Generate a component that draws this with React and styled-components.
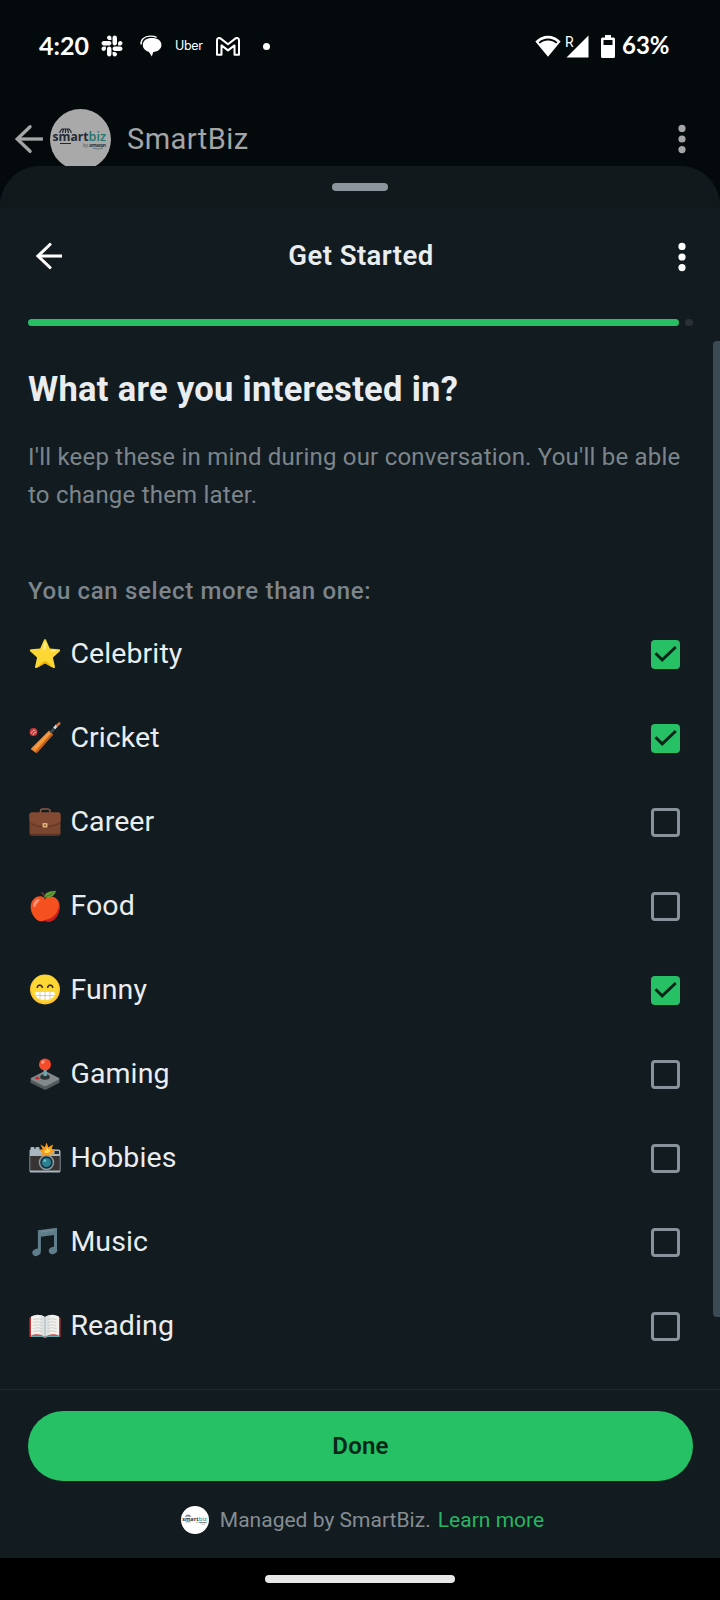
import React, { useState } from "react";
import styled, { createGlobalStyle } from "styled-components";
import { FaSlack } from "react-icons/fa";

const GlobalStyle = createGlobalStyle`
  * { box-sizing: border-box; }
  html, body { margin: 0; padding: 0; background: #04090c; }
  body { font-family: Roboto, "Liberation Sans", sans-serif; overflow: hidden; }
  svg { display: block; flex: none; }
  button { font: inherit; border: 0; padding: 0; background: none; }
`;

const Screen = styled.div`
  width: 720px;
  height: 1600px;
  display: flex;
  flex-direction: column;
  overflow: hidden;
  background: #04090c;
`;

const StatusBar = styled.header`
  height: 92px;
  flex: none;
  display: flex;
  align-items: center;
  justify-content: space-between;
  padding: 0 50px 0 39px;
  color: #fff;
`;

const StatusGroup = styled.div`
  display: flex;
  align-items: center;
`;

const StatusText = styled.span`
  width: ${(p) => p.$width}px;
  padding-bottom: 2px;
  font-family: Lato, Roboto, sans-serif;
  font-size: ${(p) => p.$size}px;
  font-weight: 700;
  line-height: 30px;
  white-space: nowrap;
`;

const StatusIcon = styled.span`
  display: flex;
  margin-left: ${(p) => p.$gap}px;
`;

const UberMark = styled.span`
  width: 28px;
  margin-left: 13px;
  font-family: Inter, sans-serif;
  font-size: 12.5px;
  line-height: 16px;
  letter-spacing: -0.3px;
`;

const SignalMark = styled.span`
  display: flex;
  align-items: flex-start;
  margin-left: 4px;
`;

const Roaming = styled.span`
  width: 9px;
  margin: -1px -8px 0 0;
  font-size: 14px;
  line-height: 16px;
`;

const ChatBar = styled.div`
  height: 74px;
  flex: none;
  display: flex;
  align-items: flex-start;
  padding: 16px 34px 0 14px;
  overflow: hidden;
  color: #a3a5a6;
`;

const ChatBarInner = styled.div`
  display: flex;
  align-items: center;
  flex: 1;
  height: 62px;
`;

const Avatar = styled.div`
  width: ${(p) => p.$size}px;
  height: ${(p) => p.$size}px;
  flex: none;
  border-radius: 50%;
  background: ${(p) => (p.$dim ? "#a9a9aa" : "#fff")};
  overflow: hidden;
`;

const ChatTitle = styled.div`
  flex: 1;
  margin-left: 16px;
  font-size: 29px;
  letter-spacing: 0.45px;
`;

const Sheet = styled.section`
  flex: 1;
  display: flex;
  flex-direction: column;
  border-radius: 40px 40px 0 0;
  overflow: hidden;
  background: #121b20;
`;

const SheetGrip = styled.div`
  height: 42px;
  flex: none;
  display: flex;
  justify-content: center;
  padding-top: 17px;
  background: #12191c;

  &::after {
    content: "";
    width: 56px;
    height: 8px;
    border-radius: 4px;
    background: #8c959d;
  }
`;

const Toolbar = styled.div`
  height: 111px;
  flex: none;
  display: grid;
  grid-template-columns: 28px 1fr 28px;
  align-items: start;
  padding: 29px 24px 0 35px;
  color: #fff;
`;

const IconButton = styled.button`
  height: ${(p) => p.$height || 40}px;
  display: flex;
  align-items: center;
  justify-content: center;
  color: inherit;
`;

const ToolbarTitle = styled.h1`
  margin: 0;
  padding-right: 9px;
  text-align: center;
  font-size: 27.5px;
  font-weight: 600;
  line-height: 38px;
  letter-spacing: 0.45px;
  color: #e9edef;
`;

const Progress = styled.div`
  height: 8px;
  flex: none;
  display: flex;
  gap: 6px;
  padding: 0 27px 0 28px;
`;

const ProgressPart = styled.span`
  flex: ${(p) => (p.$done ? "1" : "0 0 8px")};
  height: 7px;
  border-radius: 4px;
  background: ${(p) => (p.$done ? "#28bf64" : "#2a3036")};
`;

const Body = styled.div`
  flex: 1;
  display: flex;
  min-height: 0;
  padding-top: 14px;
`;

const Content = styled.main`
  flex: 1;
  padding: 24px 0 0 28px;
`;

const ScrollTrack = styled.div`
  width: 7px;

  &::before {
    content: "";
    display: block;
    height: 976px;
    border-radius: 4px 0 0 4px;
    background: #3c4a54;
  }
`;

const Question = styled.h2`
  margin: 0;
  font-size: 34.5px;
  font-weight: 700;
  line-height: 48px;
  letter-spacing: 0.3px;
  color: #e9edef;
`;

const Description = styled.p`
  margin: 25px 0 0;
  font-size: 24px;
  line-height: 38px;
  letter-spacing: 0.215px;
  color: #7c858b;
  white-space: nowrap;
`;

const GroupLabel = styled.div`
  margin-top: 62px;
  font-size: 24px;
  font-weight: 500;
  line-height: 30px;
  letter-spacing: 0.68px;
  color: #7c858b;
`;

const List = styled.div`
  margin-top: 6px;
`;

const Row = styled.label`
  height: 84px;
  display: flex;
  align-items: center;
  padding-right: 33px;
`;

const Emoji = styled.span`
  width: 42.4px;
  flex: none;
  padding-left: 1px;
`;

const RowLabel = styled.span`
  flex: 1;
  font-size: 28.5px;
  line-height: 36px;
  letter-spacing: 0.1px;
  color: #e9edef;
`;

const Check = styled.button`
  width: 29px;
  height: 29px;
  display: flex;
  align-items: center;
  justify-content: center;
  border-radius: 4px;
  border: ${(p) => (p.$on ? "0" : "3px solid #87929a")};
  background: ${(p) => (p.$on ? "#26c165" : "transparent")};
`;

const Footer = styled.footer`
  height: 169px;
  flex: none;
  display: flex;
  flex-direction: column;
  align-items: center;
  border-top: 1px solid #20292e;
  padding: 21px 27px 0 28px;
`;

const DoneButton = styled.button`
  width: 100%;
  height: 70px;
  border-radius: 35px;
  background: #26c165;
  color: #07271a;
  font-size: 24px;
  font-weight: 600;
  letter-spacing: 0.2px;
`;

const Managed = styled.div`
  display: flex;
  align-items: center;
  margin-top: 25px;
  height: 28px;
  padding-left: 4px;
  font-size: 21px;
  line-height: 28px;
  letter-spacing: 0.02px;
  color: #858d93;
  white-space: nowrap;
`;

const ManagedText = styled.span`
  margin-left: 11px;
`;

const Link = styled.a`
  margin-left: 7px;
  color: #27b563;
`;

const NavBar = styled.nav`
  height: 42px;
  flex: none;
  display: flex;
  justify-content: center;
  padding-top: 17px;
  background: #000;

  &::after {
    content: "";
    width: 190px;
    height: 8px;
    border-radius: 4px;
    background: #e7e7e7;
  }
`;

const BackArrow = ({ size = 28 }) => (
  <svg width={size} height={size} viewBox="0 0 28 28" fill="none" stroke="currentColor" strokeWidth="3.1">
    <path d="M27 14H3" />
    <path d="M15 2.5 3 14l12 11.5" strokeLinejoin="miter" strokeLinecap="round" />
  </svg>
);

const MoreDots = () => (
  <svg width="8" height="30" viewBox="0 0 8 30" fill="currentColor">
    <circle cx="4" cy="4.4" r="3.6" />
    <circle cx="4" cy="15" r="3.6" />
    <circle cx="4" cy="25.6" r="3.6" />
  </svg>
);

const Logo = ({ dim }) => (
  <svg width="100%" height="100%" viewBox="0 0 61 61">
    <g fill="none" stroke={dim ? "#20272e" : "#2c3340"} strokeWidth="1.2">
      <path d="M10 24v-1.5l2-2.5h7l2 2.5V24M12.5 24l1-4M15.5 24v-4M18.5 24l-1-4M10 34.5h11" />
    </g>
    <g fontFamily="Open Sans" fontWeight="700" fontSize="13">
      <text x="2.5" y="32" textLength="36" lengthAdjust="spacingAndGlyphs" fill={dim ? "#232a32" : "#2c3340"}>smart</text>
      <text x="38.5" y="32" textLength="17.5" lengthAdjust="spacingAndGlyphs" fontWeight="600" fill={dim ? "#26766f" : "#2f9f98"}>biz</text>
    </g>
    <text x="33" y="38" fontSize="4.5" fontFamily="Open Sans" fill="#444b50">by</text>
    <text x="39" y="38" textLength="17" fontSize="5" fontWeight="700" fontFamily="Open Sans" fill="#33383d">amazon</text>
    <path d="M43 39q5 2.3 10 0" fill="none" stroke="#55666a" strokeWidth=".8" />
  </svg>
);

const ChatBubbles = () => (
  <svg width="22" height="22" viewBox="0 0 22 22" fill="#fff">
    <path d="M12 3c5.500 0 9.400 2.600 9.400 6.900 0 4-3.400 6.500-8.100 7.100l-1.500 4.600-3-4.900C5.200 15.800 2.800 13.200 2.800 9.900 2.800 5.600 6.600 3 12 3Z" />
    <path d="M1 9.500C.6 4.500 4.600 1.300 9.800 1.200c3-.1 5.200.4 6.800 1.200" fill="none" stroke="#fff" strokeWidth="1.300" />
  </svg>
);

const GmailMark = () => (
  <svg width="24" height="19" viewBox="0 0 24 19" fill="none" stroke="#fff" strokeWidth="2" strokeLinejoin="round">
    <path d="M1 17.8V3.200C1 .9 3.300.4 4.800 1.600L12 7.200l7.200-5.600C20.700.4 23 .9 23 3.200v14.600h-4.500V8.400l-6.500 5-6.500-5v9.400Z" />
  </svg>
);

const Wifi = () => (
  <svg width="26" height="22" viewBox="0 0 26 22">
    <path d="M13 21.8.4 6.500C7.500-1.200 18.500-1.200 25.600 6.500Z" fill="#fff" />
    <path d="M3.600 7.200C9 2.300 17 2.300 22.400 7.200l-1.200 1.400C16.500 4.500 9.500 4.500 4.800 8.600Z" fill="#04090c" />
  </svg>
);

const Signal = () => (
  <SignalMark>
    <Roaming>R</Roaming>
    <svg width="23" height="23" viewBox="0 0 23 23">
      <path d="M22.500.5v22H.5Z" fill="#fff" />
    </svg>
  </SignalMark>
);

const Battery = () => (
  <svg width="14" height="23" viewBox="0 0 14 23">
    <path d="M4 0h6v2.500h2.500A1.500 1.500 0 0 1 14 4v17.500a1.500 1.500 0 0 1-1.500 1.500h-11A1.500 1.500 0 0 1 0 21.500V4a1.500 1.500 0 0 1 1.500-1.500H4Z" fill="#fff" />
    <path d="M2.500 5h9v5h-9z" fill="#04090c" />
  </svg>
);

const EMOJI = {
  star: (
    <>
      <path d="M16 1.200c.7 0 1 .5 1.300 1.200l3.500 8 9 .9c1.500.2 1.800 1.300.8 2.200l-6.700 6 2 8.900c.3 1.500-.7 2.100-1.900 1.400L16 25.200l-8 4.600c-1.200.7-2.200.1-1.900-1.400l2-8.900-6.700-6c-1-.9-.7-2 .8-2.200l9-.9 3.500-8c.3-.7.600-1.200 1.300-1.200Z" fill="#fdd835" />
      <path d="m15.300 4.800-.7 7.200c0 .5.700.7.900.2l1.600-4.900c.3-.9.2-1.600-.2-2.500-.4-.9-1.500-.9-1.600 0ZM22 12.600l5.300-.4c-1 .8-3.200 1.600-5 1.200-.6-.1-.8-.7-.3-.8Z" fill="#fff59d" />
      <path d="m16 25.200 7 4.100c-3.200-5-5.300-6-7-6s-3.800 1-7 6Z" fill="#f4b400" />
    </>
  ),
  cricket: (
    <>
      <path d="M2.300 26.200 20 8.600l4 4L8.700 30c-.8.9-2 .9-2.900.1l-3.200-2.300c-.7-.5-.8-1-.3-1.600Z" fill="#ef8b2c" />
      <path d="m6 30.300 16.500-18.900L24 13 8.700 30c-.8.9-1.900 1-2.700.3Z" fill="#ba5d1c" />
      <path d="M5.500 26.500 20.300 11" stroke="#f6a54a" strokeWidth="1.500" />
      <path d="m21.500 10.700 4.500-5.200" stroke="#3f4a50" strokeWidth="2.800" />
      <path d="m25.300 6.300 2.500-2.900" stroke="#d5dcdf" strokeWidth="2.800" />
      <path d="m28.300 3.300 2-1.800" stroke="#ce6d43" strokeWidth="2.600" strokeLinecap="round" />
      <circle cx="4.500" cy="10" r="3.900" fill="#c8383a" />
      <path d="M2 11.500c.6-1.800 2-3.200 4.300-3.500M4 13c.2-1.600 1.500-2.900 3.500-3" stroke="#e9b5ae" strokeWidth="1" fill="none" />
    </>
  ),
  briefcase: (
    <>
      <path d="M11.500 7V5c0-1.200 1-2 2.500-2h4.500c1.500 0 2.500.8 2.500 2v2" fill="none" stroke="#8d5a3f" strokeWidth="1.500" />
      <rect x=".5" y="6.500" width="31" height="23" rx="2" fill="#7b4630" />
      <path d="M.5 15q8 4 15.500 4t15.500-4V8.500a2 2 0 0 0-2-2h-27a2 2 0 0 0-2 2Z" fill="#824a32" />
      <path d="M1.500 17.500q7 3.500 14.500 3.500t14.500-3.500" fill="none" stroke="#57301f" strokeWidth=".9" />
      <path d="M1 27.800h30v.2a1.500 1.500 0 0 1-1.500 1.500h-27A1.500 1.500 0 0 1 1 28Z" fill="#5d3524" />
      <rect x="13.500" y="17" width="5" height="4.500" rx=".8" fill="#e2b376" />
      <rect x="15" y="18.500" width="2" height="1.500" fill="#865d3b" />
    </>
  ),
  apple: (
    <>
      <path d="M15.800 8C12 5 6.500 5.900 3.500 10.500.7 14.800 1.200 21 4.500 26c2.500 3.900 5.500 5.700 8.500 5.200 1.500-.3 3.800-.3 5.400.2 3.900 1 8.600-2.200 11-8.400 2.400-6.300 1.200-12.300-2.900-15-3.300-2.200-7.300-1.700-10.700 0Z" fill="#f4511e" />
      <path d="M29.800 14c.4 6-3.500 13-9.500 14.800-3.500 1-6 1.300-7 2.400 3.500.4 3.700-.3 5.100.2 3.900 1 8.600-2.200 11-8.400 1.200-3.300 1.300-6.500.4-9Z" fill="#ca1d25" />
      <path d="M4.500 15.500c.1-3 1.700-6 4.500-6.500 1.500-.2 2 1 1 2.200-1.700 1.700-2.800 3-3.500 5-.5 1.500-2 1.200-2-.7Z" fill="#ff9478" />
      <path d="M16 8.500c-.1-2.200-1-4.200-3-5.700" fill="none" stroke="#543930" strokeWidth="1.700" strokeLinecap="round" />
      <path d="M15.500 7c.6-5.200 5.500-5.600 11.500-6.200-1.200 4.900-4.500 7.500-11.500 6.200Z" fill="#689f38" />
      <path d="M17 6.500q4-1.200 8-4.300" fill="none" stroke="#33691e" strokeWidth=".8" />
    </>
  ),
  grin: (
    <>
      <circle cx="16" cy="15.500" r="15" fill="#fdc52f" />
      <circle cx="16" cy="14.500" r="13.500" fill="#fdd835" />
      <path d="M8.300 13.200c.7-2.700 4.300-2.700 5 0M18.700 13.200c.7-2.700 4.300-2.700 5 0" fill="none" stroke="#422b0d" strokeWidth="1.700" strokeLinecap="round" />
      <path d="M8 18h16c1.600 0 2.200 1 1.900 2.300-.8 3.500-4.300 5.500-9.900 5.500s-9.100-2-9.900-5.500C5.800 19 6.400 18 8 18Z" fill="#fff" />
      <path d="M6.200 21.500h19.600M11 18v7M16 18v7.800M21 18v7" stroke="#c8b890" strokeWidth=".7" />
    </>
  ),
  joystick: (
    <>
      <path d="M1.500 21.500v3.200L15 31.400q1.200.6 2.400 0l13.100-6.700v-3.200Z" fill="#525a5e" />
      <path d="m2 20 12.800-6.400q1.200-.5 2.400 0L30 20q1.200.8 0 1.600L17.200 28q-1.200.6-2.400 0L2 21.600q-1.200-.8 0-1.600Z" fill="#84898c" />
      <ellipse cx="16" cy="19" rx="4.800" ry="2.800" fill="#2b3338" />
      <path d="M14.600 10h3.200v8h-3.200z" fill="#6aa9b4" />
      <circle cx="16" cy="6.500" r="6" fill="#f44b2a" />
      <ellipse cx="14" cy="4" rx="2" ry="1.400" fill="#ff9b84" transform="rotate(-35 14 4)" />
      <ellipse cx="8.200" cy="20.200" rx="2.200" ry="1.400" fill="#d42b2b" />
    </>
  ),
  camera: (
    <>
      <path d="M.5 9q0-1.500 1-1.500V6q0-1 1-1h2q1 0 1 1v1h1V6q0-1 1-1h2q1 0 1 1v1.500h19q2 0 2 2V29q0 1.500-1.500 1.500H2Q.5 30.500.5 29Z" fill="#a8b6bf" />
      <path d="M1.200 14h29.600v14.500H1.200z" fill="#373333" />
      <rect x="25.500" y="9" width="4.500" height="3" fill="#29292b" />
      <circle cx="17.500" cy="20.500" r="7.800" fill="#8b999f" />
      <circle cx="17.500" cy="20.500" r="6.200" fill="#162e3b" />
      <circle cx="17.500" cy="20.500" r="4.600" fill="#2b8092" />
      <circle cx="15.800" cy="18.700" r="1.400" fill="#74bbc7" />
      <path d="m17.500.6 1.800 4.700L24 2.500l-1.200 4.400 3.800.8-3.800 2 2.400 3.300-4.600-1.100-2.100 2.300-2.100-1.900-5 2.100 2.100-4-3.300-1.600 3.700-1.200-2.500-5.100 4.500 2.700Z" fill="#fb9b18" />
      <path d="m17.900 4.800 1.100 3 2.700-1-.9 2.600-1.700 1.700-3.400-.3-.3-1.800 1.900-.7Z" fill="#ffdf5c" />
    </>
  ),
  music: (
    <>
      <path d="M8.900 4.300 28 1.700v21.500h-3V8.900L11.900 10.700v14.500h-3Z" fill="#607d8b" />
      <ellipse cx="7.500" cy="26.300" rx="4.300" ry="3.500" fill="#607d8b" transform="rotate(-25 7.500 26.300)" />
      <ellipse cx="24" cy="24.500" rx="4.300" ry="3.500" fill="#607d8b" transform="rotate(-25 24 24.500)" />
      <path d="m12 5.900 13-1.800" stroke="#78909c" strokeWidth="1" />
    </>
  ),
  book: (
    <>
      <path d="M.5 7.500h31V27H.5Z" fill="#c83737" />
      <path d="M2 25.500h12l2 2 2-2h12v1.500H18.500q-2.500 2-5 0H2Z" fill="#69a5ad" />
      <path d="M2 6.500Q9 2.800 16 7q7-4.200 14-.5v19Q23 22.500 16 26.500 9 22.500 2 25.500Z" fill="#f2f1ec" />
      <path d="M16 7q-2.500-1.500-4.500-1.900V24q2.500.6 4.500 2.500 2-1.900 4.500-2.500V5.100Q18.500 5.500 16 7Z" fill="#dde3e3" />
      <path d="M16 7v19.500" stroke="#93a1a4" strokeWidth=".7" />
      <path d="M4.500 9.500q4.500-1.500 9 0M4.500 12.500q4.500-1.500 9 0M4.500 15.500q4.500-1.500 9 0M4.500 18.500q4.500-1.500 9 0M4.500 21.500q4.500-1.500 9 0M18.500 9.500q4.500-1.500 9 0M18.500 12.500q4.500-1.500 9 0M18.500 15.500q4.500-1.500 9 0M18.500 18.500q4.500-1.500 9 0M18.500 21.500q4.500-1.500 9 0" fill="none" stroke="#c6c8c7" strokeWidth=".8" />
    </>
  ),
};

const INTERESTS = [
  { name: "Celebrity", icon: "star", on: true },
  { name: "Cricket", icon: "cricket", on: true },
  { name: "Career", icon: "briefcase" },
  { name: "Food", icon: "apple" },
  { name: "Funny", icon: "grin", on: true },
  { name: "Gaming", icon: "joystick" },
  { name: "Hobbies", icon: "camera" },
  { name: "Music", icon: "music" },
  { name: "Reading", icon: "book" },
];

function InterestRow({ name, icon, checked, onToggle }) {
  return (
    <Row>
      <Emoji>
        <svg width="32" height="32" viewBox="0 0 32 32">{EMOJI[icon]}</svg>
      </Emoji>
      <RowLabel>{name}</RowLabel>
      <Check $on={checked} onClick={onToggle} role="checkbox" aria-checked={checked} aria-label={name}>
        {checked && (
          <svg width="29" height="29" viewBox="0 0 29 29">
            <path d="m4.500 13.200 6.700 6.700L24.800 7" fill="none" stroke="#092519" strokeWidth="2.900" />
          </svg>
        )}
      </Check>
    </Row>
  );
}

export default function App() {
  const [selected, setSelected] = useState(() => new Set(INTERESTS.filter((i) => i.on).map((i) => i.name)));
  const toggle = (name) =>
    setSelected((prev) => {
      const next = new Set(prev);
      next.has(name) ? next.delete(name) : next.add(name);
      return next;
    });

  return (
    <>
      <GlobalStyle />
      <Screen>
        <StatusBar>
          <StatusGroup>
            <StatusText $width={51} $size={25}>4:20</StatusText>
            <StatusIcon $gap={10}><FaSlack size={24} /></StatusIcon>
            <StatusIcon $gap={16}><ChatBubbles /></StatusIcon>
            <UberMark>Uber</UberMark>
            <StatusIcon $gap={13}><GmailMark /></StatusIcon>
            <StatusIcon $gap={23}>
              <svg width="7" height="7"><circle cx="3.500" cy="3.500" r="3.500" fill="#fff" /></svg>
            </StatusIcon>
          </StatusGroup>
          <StatusGroup>
            <Wifi />
            <Signal />
            <StatusIcon $gap={12}><Battery /></StatusIcon>
            <StatusIcon $gap={7}><StatusText $width={48} $size={24}>63%</StatusText></StatusIcon>
          </StatusGroup>
        </StatusBar>
        <ChatBar>
          <ChatBarInner>
            <BackArrow size={30} />
            <StatusIcon $gap={6}><Avatar $size={61} $dim><Logo dim /></Avatar></StatusIcon>
            <ChatTitle>SmartBiz</ChatTitle>
            <MoreDots />
          </ChatBarInner>
        </ChatBar>
        <Sheet>
          <SheetGrip />
          <Toolbar>
            <IconButton $height={38} aria-label="Back"><BackArrow /></IconButton>
            <ToolbarTitle>Get Started</ToolbarTitle>
            <IconButton aria-label="More"><MoreDots /></IconButton>
          </Toolbar>
          <Progress>
            <ProgressPart $done />
            <ProgressPart />
          </Progress>
          <Body>
            <Content>
              <Question>What are you interested in?</Question>
              <Description>
                I'll keep these in mind during our conversation. You'll be able<br />to change them later.
              </Description>
              <GroupLabel>You can select more than one:</GroupLabel>
              <List>
                {INTERESTS.map((i) => (
                  <InterestRow
                    key={i.name}
                    name={i.name}
                    icon={i.icon}
                    checked={selected.has(i.name)}
                    onToggle={() => toggle(i.name)}
                  />
                ))}
              </List>
            </Content>
            <ScrollTrack />
          </Body>
          <Footer>
            <DoneButton>Done</DoneButton>
            <Managed>
              <Avatar $size={28}><Logo /></Avatar>
              <ManagedText>Managed by SmartBiz.</ManagedText>
              <Link>Learn more</Link>
            </Managed>
          </Footer>
        </Sheet>
        <NavBar />
      </Screen>
    </>
  );
}
